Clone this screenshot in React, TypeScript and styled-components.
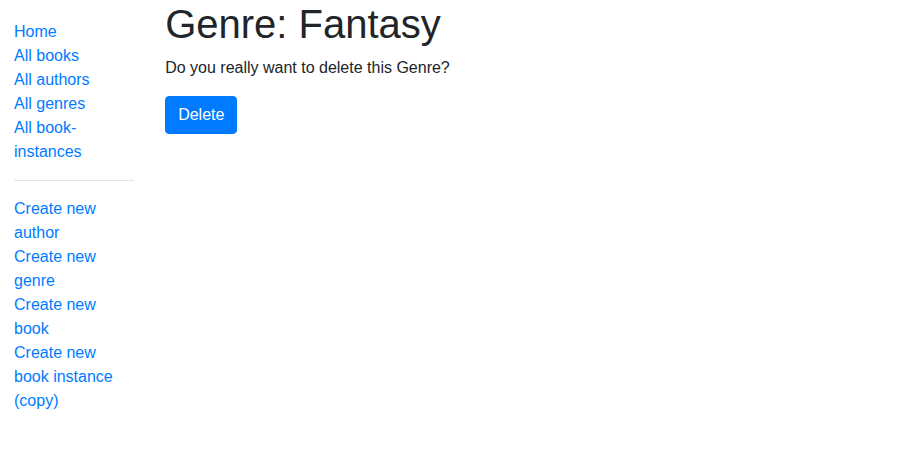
import React from "react";
import styled, { createGlobalStyle } from "styled-components";

const Global = createGlobalStyle`
  *, *::before, *::after { box-sizing: border-box; }
  body {
    margin: 0;
    font-family: "Liberation Sans", Arial, sans-serif;
    font-size: 16px;
    line-height: 1.5;
    color: #212529;
    background: #fff;
  }
`;

const Container = styled.div`
  width: 100%;
  padding: 0 15px;
`;

const Row = styled.div`
  display: flex;
  margin: 0 -15px;
`;

const Col = styled.div<{ $span: number }>`
  flex: 0 0 ${(p) => (p.$span / 12) * 100}%;
  max-width: ${(p) => (p.$span / 12) * 100}%;
  padding: 0 15px;
`;

const SideCol = styled(Col)`
  padding-left: 14px;
  padding-right: 16px;
`;

const NavList = styled.ul`
  margin: 20px 0 0;
  padding: 0;
  list-style: none;
`;

const NavLink = styled.a`
  color: #007bff;
  text-decoration: none;
`;

const Divider = styled.hr`
  margin: 16px 0;
  border: 0;
  border-top: 1px solid rgba(0, 0, 0, 0.1);
`;

const Title = styled.h1`
  margin: 0 0 8px;
  font-size: 40px;
  font-weight: 500;
  line-height: 1.2;
`;

const Text = styled.p`
  margin: 0 0 16px;
`;

const Button = styled.button`
  display: inline-block;
  font-family: inherit;
  font-size: 16px;
  line-height: 1.5;
  padding: 6px 12px;
  color: #fff;
  background: #007bff;
  border: 1px solid #007bff;
  border-radius: 4px;
  cursor: pointer;
`;

const first = ["Home", "All books", "All authors", "All genres", "All book-instances"];
const second = [
  "Create new author",
  "Create new genre",
  "Create new book",
  "Create new book instance (copy)",
];

export default function App() {
  return (
    <>
      <Global />
      <Container>
        <Row>
          <SideCol $span={2}>
            <NavList>
              {first.map((t) => (
                <li key={t}>
                  <NavLink href="#">{t}</NavLink>
                </li>
              ))}
              <Divider />
              {second.map((t) => (
                <li key={t}>
                  <NavLink href="#">{t}</NavLink>
                </li>
              ))}
            </NavList>
          </SideCol>
          <Col $span={10}>
            <Title>Genre: Fantasy</Title>
            <Text>Do you really want to delete this Genre?</Text>
            <form onSubmit={(e) => e.preventDefault()}>
              <Button type="submit">Delete</Button>
            </form>
          </Col>
        </Row>
      </Container>
    </>
  );
}
